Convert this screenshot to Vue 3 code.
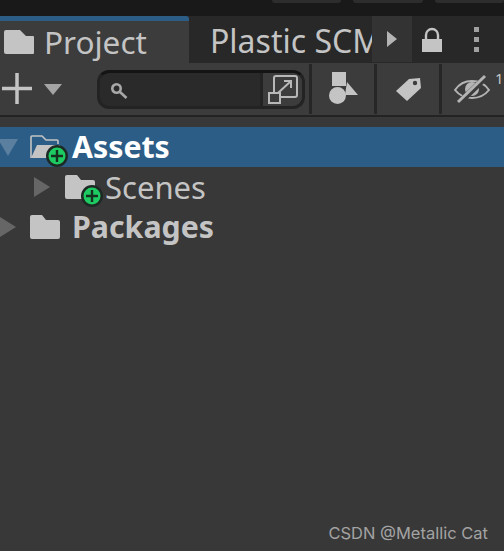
<script setup>
const rows = [
  { name: "Assets", depth: 0, open: true, selected: true, badge: true },
  { name: "Scenes", depth: 1, badge: true },
  { name: "Packages", depth: 0, bold: true },
];
</script>

<template>
  <div class="window">
    <div class="topBar">
      <span class="topButton"></span>
      <span class="topButton"></span>
      <span class="topButton"></span>
    </div>

    <div class="tabRow">
      <div class="tab active">
        <svg class="tabFolder" width="30" height="26" viewBox="0 0 30 26">
          <path d="M0 3a2 2 0 0 1 2-2h14l6 6h7a1 1 0 0 1 1 1v16a1 1 0 0 1-1 1H2a2 2 0 0 1-2-2z" fill="#c4c4c4" />
        </svg>
        <span>Project</span>
      </div>
      <div class="tab other"><span>Plastic SCM</span></div>
      <div class="moreTabs">
        <svg width="12" height="18" viewBox="0 0 12 18"><path d="M1 1l10 8-10 8z" fill="#b4b4b4" /></svg>
      </div>
      <div class="tabTools">
        <svg width="22" height="26" viewBox="0 0 22 26">
          <path d="M5 13V8a6 6 0 0 1 12 0v5" fill="none" stroke="#c4c4c4" stroke-width="2.4" />
          <rect x="1" y="12" width="20" height="13" fill="#c4c4c4" />
        </svg>
        <svg width="8" height="26" viewBox="0 0 8 26">
          <rect x="1" y="0" width="5" height="5" fill="#a0a0a0" />
          <rect x="1" y="10" width="5" height="5" fill="#a0a0a0" />
          <rect x="1" y="20" width="5" height="5" fill="#a0a0a0" />
        </svg>
      </div>
    </div>

    <div class="toolbar">
      <div class="addMenu">
        <svg width="32" height="32" viewBox="0 0 32 32">
          <path d="M0 15.500h30M15 0v31" stroke="#c4c4c4" stroke-width="3.500" />
        </svg>
        <svg width="18" height="11" viewBox="0 0 18 11"><path d="M0 0h18l-9 11z" fill="#a4a4a4" /></svg>
      </div>
      <div class="search">
        <div class="searchField">
          <svg width="20" height="20" viewBox="0 0 20 20">
            <circle cx="6.500" cy="6.500" r="4.200" fill="none" stroke="#a8a8a8" stroke-width="2.600" />
            <path d="M10 10l6.500 6" stroke="#a8a8a8" stroke-width="2.600" />
          </svg>
        </div>
        <div class="searchMode">
          <svg width="32" height="32" viewBox="0 0 32 32">
            <path d="M7 19V5a2 2 0 0 1 2-2h19a2 2 0 0 1 2 2v17a2 2 0 0 1-2 2H14" fill="none" stroke="#b8b8b8" stroke-width="2" />
            <rect x="2" y="20" width="11" height="10" fill="none" stroke="#b8b8b8" stroke-width="2" />
            <path d="M11 20l13-12M17 8h7v7" fill="none" stroke="#b8b8b8" stroke-width="2" />
          </svg>
        </div>
      </div>
      <div class="toolButton">
        <svg width="30" height="34" viewBox="0 0 30 34">
          <rect x="4" y="0" width="14" height="14" fill="#c4c4c4" />
          <path d="M19 10l11 13H17z" fill="#c4c4c4" />
          <circle cx="9.500" cy="23.500" r="8.500" fill="#c4c4c4" />
        </svg>
      </div>
      <div class="toolButton">
        <svg width="26" height="26" viewBox="0 0 26 26">
          <path d="M14 3l11-1 1 10-14 13L1 15z" fill="#c4c4c4" />
          <circle cx="20" cy="7" r="2.200" fill="#3c3c3c" />
        </svg>
      </div>
      <div class="toolButton eye">
        <svg width="36" height="30" viewBox="0 0 36 30">
          <path d="M1 16c4-6 10-9 17-9s13 3 17 9c-4 5-10 8-17 8S5 21 1 16z" fill="none" stroke="#b4b4b4" stroke-width="2" />
          <circle cx="18" cy="15" r="7" fill="#b4b4b4" />
          <path d="M5 29L32 3" stroke="#3c3c3c" stroke-width="6" />
          <path d="M4 28L31 2" stroke="#b4b4b4" stroke-width="3" />
        </svg>
        <span class="eyeCount">1</span>
      </div>
    </div>
    <div class="divider"></div>

    <div class="tree">
      <div
        v-for="row in rows"
        :key="row.name"
        class="treeRow"
        :class="{ selected: row.selected, child: row.depth > 0 }"
      >
        <svg class="arrow" width="20" height="20" viewBox="0 0 20 20">
          <path v-if="row.open" d="M0 2h20L10 19z" fill="#5b7f9f" />
          <path v-else d="M2 0l16 10L2 20z" fill="#666" />
        </svg>
        <div class="folder">
          <svg width="30" height="26" viewBox="0 0 30 26">
            <template v-if="row.open">
              <path d="M1 24V3a1 1 0 0 1 1-1h10l4 4h11a1 1 0 0 1 1 1v3" fill="none" stroke="#c4c4c4" stroke-width="1.600" />
              <path d="M1 24l6-13h23l-4 13z" fill="#c4c4c4" />
            </template>
            <path v-else d="M0 3a2 2 0 0 1 2-2h10l4 5h12a2 2 0 0 1 2 2v15a2 2 0 0 1-2 2H2a2 2 0 0 1-2-2z" fill="#c4c4c4" />
          </svg>
          <svg v-if="row.badge" class="badge" width="24" height="24" viewBox="0 0 24 24">
            <circle cx="12" cy="12" r="11" fill="#1d2a24" />
            <circle cx="12" cy="12" r="8.500" fill="#1ecb62" />
            <path d="M12 6v12M6 12h12" stroke="#16301f" stroke-width="2.400" />
          </svg>
        </div>
        <span class="label" :class="{ strong: row.depth === 0 }">{{ row.name }}</span>
      </div>
    </div>

    <div class="watermark">CSDN @Metallic Cat</div>
  </div>
</template>

<style>
html,
body {
  margin: 0;
  background: #383838;
}
</style>

<style scoped>
.window {
  width: 504px;
  height: 551px;
  position: relative;
  overflow: hidden;
  background: #383838;
  font-family: "Noto Sans", "Open Sans", sans-serif;
  color: #c4c4c4;
}

.topBar {
  height: 16px;
  background: #191919;
  display: flex;
  padding-left: 272px;
  gap: 12px;
  box-sizing: border-box;
}

.topButton {
  width: 76px;
  height: 3px;
  background: #2d2d2d;
  border-radius: 0 0 4px 4px;
}

.tabRow {
  height: 47px;
  background: #282828;
  display: flex;
  align-items: stretch;
}

.tab {
  display: flex;
  align-items: center;
  font-size: 32px;
  box-sizing: border-box;
}

.tab.active {
  width: 189px;
  background: #3c3c3c;
  border-top: 5px solid #2c5d87;
  border-top-right-radius: 3px;
  padding-left: 4px;
  gap: 10px;
  font-size: 31.500px;
  line-height: 38px;
}

.tab.other {
  width: 183px;
  padding-left: 21px;
  padding-top: 1px;
  overflow: hidden;
  white-space: nowrap;
}

.moreTabs {
  width: 40px;
  height: 46px;
  background: #333;
  display: flex;
  align-items: center;
  justify-content: center;
}

.tabTools {
  display: flex;
  align-items: center;
  gap: 30px;
  padding-left: 9px;
}

.toolbar {
  height: 52px;
  background: #3c3c3c;
  display: flex;
  align-items: center;
}

.addMenu {
  width: 97px;
  display: flex;
  align-items: center;
  gap: 10px;
  padding-left: 2px;
  box-sizing: border-box;
}

.search {
  width: 208px;
  height: 39px;
  box-sizing: border-box;
  border: 3px solid #232323;
  border-top-color: #141414;
  border-radius: 12px;
  background: #2a2a2a;
  display: flex;
  overflow: hidden;
}

.searchField {
  width: 160px;
  padding: 9px 0 0 10px;
  box-sizing: border-box;
}

.searchMode {
  flex: 1;
  background: #3c3c3c;
  border-left: 3px solid #232323;
  display: flex;
  align-items: center;
  justify-content: center;
}

.toolButton {
  width: 65px;
  height: 50px;
  box-sizing: border-box;
  border-left: 3px solid #262626;
  display: flex;
  align-items: center;
  justify-content: center;
  flex-shrink: 0;
}

.search + .toolButton {
  margin-left: 4px;
}

.eye {
  justify-content: flex-start;
  padding-left: 12px;
}

.eyeCount {
  font-size: 15px;
  margin-top: -22px;
  margin-left: 5px;
}

.divider {
  height: 2px;
  background: #232323;
}

.tree {
  padding-top: 10px;
}

.treeRow {
  height: 40px;
  display: flex;
  align-items: center;
}

.treeRow.selected {
  background: #2c5d87;
}

.arrow {
  margin-left: -2px;
  margin-right: 12px;
  flex-shrink: 0;
}

.treeRow.child .arrow {
  margin-left: 32px;
  margin-right: 13px;
}

.folder {
  position: relative;
  width: 30px;
  height: 26px;
  margin-right: 12px;
  flex-shrink: 0;
}

.badge {
  position: absolute;
  right: -9px;
  bottom: -8px;
}

.label {
  font-size: 30.300px;
  line-height: 40px;
}

.label.strong {
  font-weight: 700;
}

.treeRow.selected .label {
  color: #fff;
}

.treeRow.child .label {
  margin-left: -2px;
  font-size: 31px;
}

.watermark {
  position: absolute;
  right: 16px;
  bottom: 8px;
  font-family: "Inter", "Liberation Sans", sans-serif;
  font-size: 16.500px;
  color: #a3a3a3;
}
</style>
